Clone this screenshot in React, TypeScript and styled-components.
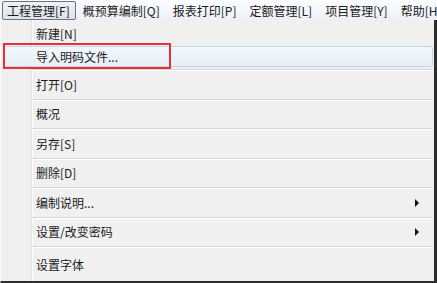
import React from 'react';
import styled, { createGlobalStyle } from 'styled-components';

const GlobalStyle = createGlobalStyle`
  html, body, #root {
    margin: 0;
    height: 100%;
  }
  body {
    background: #f0f0f0;
    font-family: 'Noto Sans CJK SC', 'Noto Sans', sans-serif;
    font-size: 12px;
    color: #1a1a1a;
    overflow: hidden;
  }
`;

const Screen = styled.div`
  display: flex;
  flex-direction: column;
  height: 100%;
  width: 437px;
`;

const MenuBar = styled.div`
  display: flex;
  align-items: stretch;
  height: 20px;
  padding-left: 2px;
  background: linear-gradient(#fcfdfe, #ecf0f7);
  white-space: nowrap;
  overflow: hidden;
`;

const MenuTitle = styled.div<{ $open?: boolean }>`
  display: flex;
  align-items: center;
  padding: 0 5px 0 4px;
  margin-right: 2px;
  margin-top: 1px;
  line-height: 18px;
  border: 1px solid ${p => (p.$open ? '#6e7378' : 'transparent')};
  border-radius: 2px;
  background: ${p => (p.$open ? 'linear-gradient(#eef2f7, #dde3ec)' : 'transparent')};
`;

const Dropdown = styled.div`
  flex: 1;
  display: flex;
  flex-direction: column;
  padding-top: 2px;
  border-left: 1px solid #f9f9f9;
  border-right: 3px solid #2e2e2e;
  border-bottom: 2px solid #2e2e2e;
  background:
    linear-gradient(90deg, transparent 30px, #e2e3e3 30px, #e2e3e3 31px, #ffffff 31px, #ffffff 32px, transparent 32px),
    #f0f0f0;
`;

const Item = styled.div<{ $height: number; $fill?: boolean }>`
  position: relative;
  display: flex;
  align-items: center;
  height: ${p => p.$height}px;
  flex: ${p => (p.$fill ? 1 : 'none')};
  padding: 0 12px 0 35px;
`;

const Hover = styled.div`
  position: absolute;
  inset: 1px 1px 2px 2px;
  border: 1px solid #c4d5ea;
  border-radius: 3px;
  background: linear-gradient(#f3f7fc, #e7eef8);
`;

const Label = styled.span`
  position: relative;
  flex: 1;
  line-height: 16px;
`;

const Arrow = styled.span`
  width: 0;
  height: 0;
  margin-right: 3px;
  border-top: 4px solid transparent;
  border-bottom: 4px solid transparent;
  border-left: 4px solid #111;
`;

const Separator = styled.div`
  height: 1px;
  margin: 0 2px 0 31px;
  background: #d7d7d7;
  border-bottom: 1px solid #ffffff;
`;

const Callout = styled.div`
  position: absolute;
  left: 2px;
  top: -2px;
  width: 164px;
  height: 22px;
  border: 2px solid #ea2f38;
  pointer-events: none;
`;

const menus = ['工程管理[F]', '概预算编制[Q]', '报表打印[P]', '定额管理[L]', '项目管理[Y]', '帮助[H]'];

const items: { label: string; sub?: boolean }[] = [
  { label: '打开[O]' },
  { label: '概况' },
  { label: '另存[S]' },
  { label: '删除[D]' },
  { label: '编制说明...', sub: true },
  { label: '设置/改变密码', sub: true },
  { label: '设置字体' },
];

export default function App() {
  return (
    <Screen>
      <GlobalStyle />
      <MenuBar>
        {menus.map((m, i) => (
          <MenuTitle key={m} $open={i === 0}>
            {m}
          </MenuTitle>
        ))}
      </MenuBar>
      <Dropdown>
        <Item $height={23}>
          <Label>新建[N]</Label>
        </Item>
        <Item $height={24}>
          <Hover />
          <Label>导入明码文件...</Label>
          <Callout />
        </Item>
        {items.map((it, i) => (
          <React.Fragment key={it.label}>
            <Separator />
            <Item $height={27.5} $fill={i === items.length - 1}>
              <Label>{it.label}</Label>
              {it.sub && <Arrow />}
            </Item>
          </React.Fragment>
        ))}
      </Dropdown>
    </Screen>
  );
}
